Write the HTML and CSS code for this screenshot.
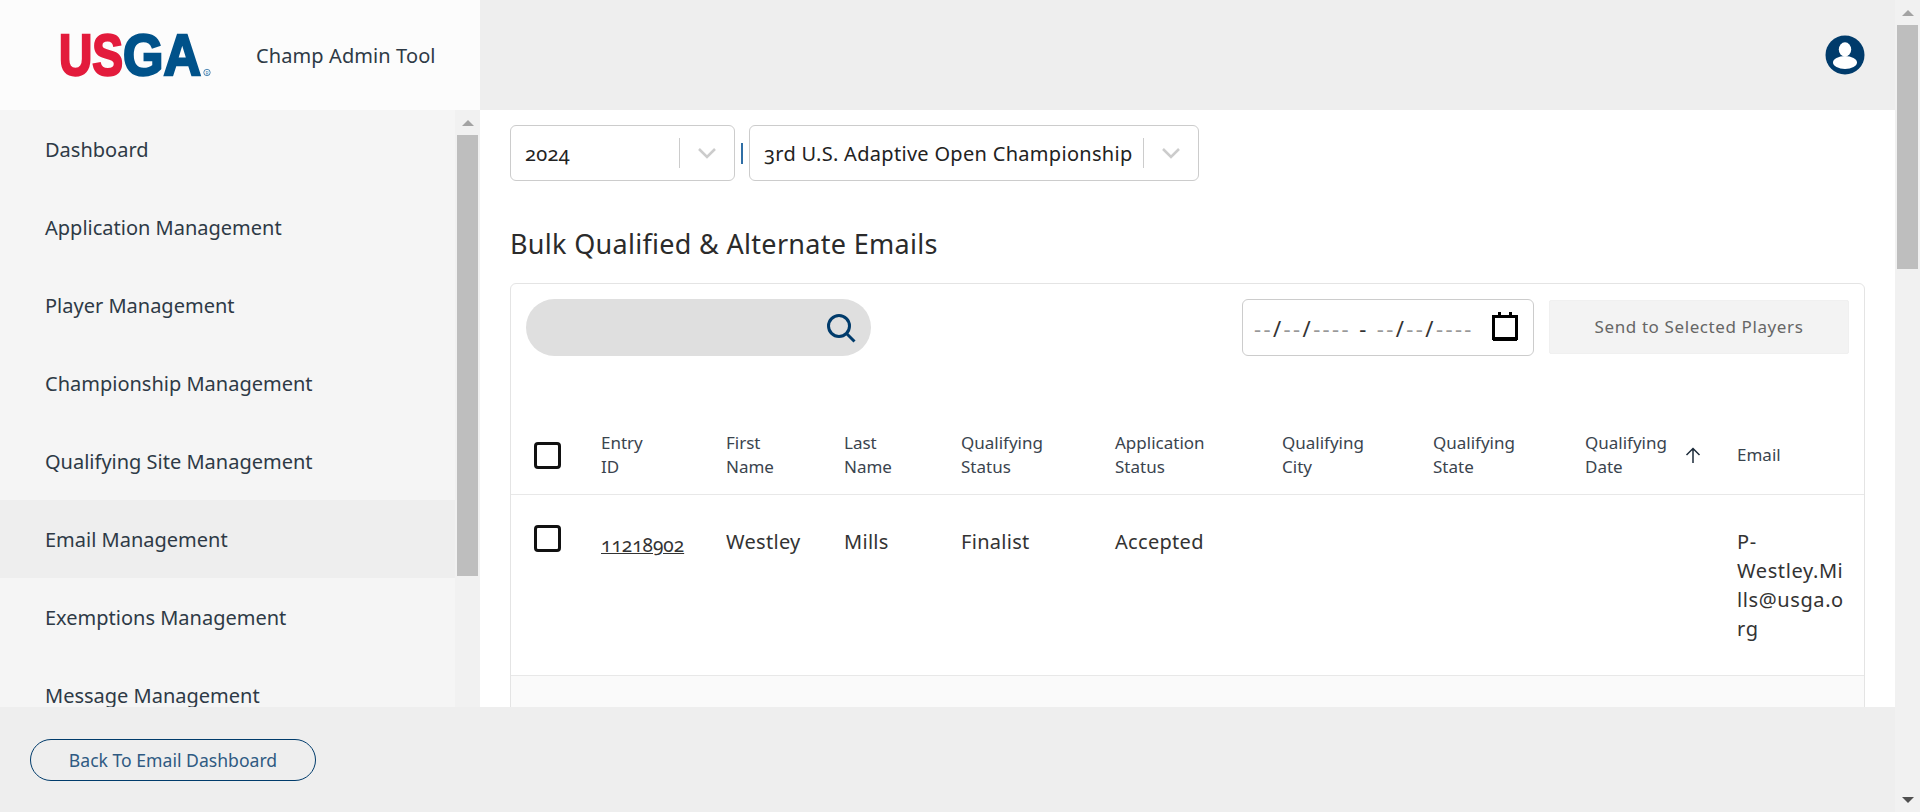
FILE: index.html
```html
<!DOCTYPE html>
<html lang="en">
<head>
    <meta charset="UTF-8">
    <meta name="viewport" content="width=device-width, initial-scale=1.0">
    <title>Champ Admin Tool</title>
    <link rel="stylesheet" href="styles.css">
</head>
<body>
    <div class="app">
        <div class="page">
            <header class="top">
                <div class="brand">
                    <svg class="logo" width="156" height="64" viewBox="0 0 156 64">
                        <text class="logo-us" x="-1" y="52" textLength="64" lengthAdjust="spacingAndGlyphs">US</text>
                        <text class="logo-ga" x="63" y="52" textLength="78" lengthAdjust="spacingAndGlyphs">GA</text>
                        <circle class="logo-reg" cx="147" cy="49.5" r="3.2"/>
                        <text class="logo-r" x="147" y="51.5">R</text>
                    </svg>
                    <span class="brand-name">Champ Admin Tool</span>
                </div>
                <div class="topbar">
                    <svg class="user-icon" width="40" height="40" viewBox="0 0 40 40">
                        <circle cx="20" cy="20" r="19.5" fill="#003b6b"/>
                        <ellipse cx="20" cy="14.5" rx="6.2" ry="7.2" fill="#fff"/>
                        <ellipse cx="20" cy="27.5" rx="12" ry="6.5" fill="#fff"/>
                    </svg>
                </div>
            </header>

            <div class="middle">
                <aside class="sidebar">
                    <nav class="menu">
                        <a class="menu-item">Dashboard</a>
                        <a class="menu-item">Application Management</a>
                        <a class="menu-item">Player Management</a>
                        <a class="menu-item">Championship Management</a>
                        <a class="menu-item">Qualifying Site Management</a>
                        <a class="menu-item menu-active">Email Management</a>
                        <a class="menu-item">Exemptions Management</a>
                        <a class="menu-item">Message Management</a>
                    </nav>
                    <div class="scrollbar">
                        <div class="arrow-box"><span class="arrow-up"></span></div>
                        <div class="thumb thumb-side"></div>
                    </div>
                </aside>

                <main class="main">
                    <div class="selects">
                        <div class="select select-year">
                            <span class="select-value">2024</span>
                            <span class="select-sep"></span>
                            <svg class="chevron" width="20" height="12" viewBox="0 0 20 12"><path d="M2 2l8 8 8-8" fill="none" stroke="#ccc" stroke-width="2.5"/></svg>
                        </div>
                        <span class="select-bar"></span>
                        <div class="select select-champ">
                            <span class="select-value">3rd U.S. Adaptive Open Championship</span>
                            <span class="select-sep"></span>
                            <svg class="chevron" width="20" height="12" viewBox="0 0 20 12"><path d="M2 2l8 8 8-8" fill="none" stroke="#ccc" stroke-width="2.5"/></svg>
                        </div>
                    </div>

                    <h1 class="title">Bulk Qualified &amp; Alternate Emails</h1>

                    <section class="card">
                        <div class="toolbar">
                            <div class="search">
                                <svg width="32" height="32" viewBox="0 0 32 32"><circle cx="14" cy="14" r="10.5" fill="none" stroke="#003b6b" stroke-width="3"/><path d="M21.5 21.5l8 8" stroke="#003b6b" stroke-width="3"/></svg>
                            </div>
                            <div class="toolbar-right">
                                <div class="date-box">
                                    <span class="date-text"><i>--</i>/<i>--</i>/<i>----</i> <b>-</b> <i>--</i>/<i>--</i>/<i>----</i></span>
                                    <svg class="cal-icon" width="28" height="30" viewBox="0 0 28 30"><path d="M2.5 5.500h23v22h-23z" fill="none" stroke="#000" stroke-width="3"/><path d="M2 26h24v4H2zM7 1h3v6H7zM18 1h3v6h-3z"/></svg>
                                </div>
                                <button class="send-btn">Send to Selected Players</button>
                            </div>
                        </div>

                        <table class="players">
                            <colgroup>
                                <col class="col-check"><col class="col-id"><col class="col-first"><col class="col-last"><col class="col-qstatus">
                                <col class="col-astatus"><col class="col-city"><col class="col-state"><col class="col-date"><col class="col-email">
                            </colgroup>
                            <thead>
                                <tr>
                                    <th class="check-cell"><span class="check"></span></th>
                                    <th>Entry<br>ID</th>
                                    <th>First<br>Name</th>
                                    <th>Last<br>Name</th>
                                    <th>Qualifying<br>Status</th>
                                    <th>Application<br>Status</th>
                                    <th>Qualifying<br>City</th>
                                    <th>Qualifying<br>State</th>
                                    <th>
                                        <div class="sort-head">
                                            <span>Qualifying<br>Date</span>
                                            <svg width="16" height="16" viewBox="0 0 16 16"><path d="M8 16V1.500M1.500 8L8 1.500 14.500 8" fill="none" stroke="#1c2b3a" stroke-width="1.500"/></svg>
                                        </div>
                                    </th>
                                    <th>Email</th>
                                </tr>
                            </thead>
                            <tbody>
                                <tr>
                                    <td class="check-cell"><span class="check"></span></td>
                                    <td class="id-cell"><a class="entry-link">11218902</a></td>
                                    <td>Westley</td>
                                    <td>Mills</td>
                                    <td>Finalist</td>
                                    <td>Accepted</td>
                                    <td></td>
                                    <td></td>
                                    <td></td>
                                    <td class="email-cell">P-<br>Westley.Mills@usga.org</td>
                                </tr>
                                <tr class="row-alt">
                                    <td colspan="10"></td>
                                </tr>
                            </tbody>
                        </table>
                    </section>
                </main>
            </div>

            <footer class="bottom">
                <button class="back-btn">Back To Email Dashboard</button>
            </footer>
        </div>

        <div class="scrollbar scrollbar-page">
            <div class="arrow-box"><span class="arrow-up"></span></div>
            <div class="thumb thumb-page"></div>
            <div class="arrow-box"><span class="arrow-down"></span></div>
        </div>
    </div>
</body>
</html>
```

FILE: styles.css
```css
* {
    margin: 0;
    padding: 0;
    box-sizing: border-box;
    font-family: "Noto Sans", Arial, sans-serif;
}
body {
    height: 812px;
    overflow: hidden;
    background: #fff;
    color: #2e3a46;
}
.app {
    display: flex;
    height: 812px;
}
.page {
    width: 1895px;
    display: flex;
    flex-direction: column;
}

/* scrollbars */
.scrollbar {
    width: 25px;
    flex-shrink: 0;
    display: flex;
    flex-direction: column;
    background: #f1f1f1;
}
.arrow-box {
    height: 25px;
    flex-shrink: 0;
    display: flex;
    align-items: center;
    justify-content: center;
}
.arrow-up {
    border-left: 6px solid transparent;
    border-right: 6px solid transparent;
    border-bottom: 6px solid #a3a3a3;
}
.arrow-down {
    border-left: 6px solid transparent;
    border-right: 6px solid transparent;
    border-top: 6px solid #505050;
}
.thumb {
    margin: 0 2px;
    background: #bebebe;
    flex-shrink: 0;
}
.thumb-side { height: 441px; }
.thumb-page { height: 244px; margin-bottom: auto; }

/* top */
.top {
    height: 110px;
    display: flex;
    flex-shrink: 0;
}
.brand {
    width: 480px;
    background: #fcfcfc;
    display: flex;
    align-items: center;
    padding-left: 60px;
}
.logo-us, .logo-ga {
    font-family: "Liberation Sans", Arial, sans-serif;
    font-weight: 700;
    font-size: 57px;
    stroke-width: 2.4px;
}
.logo-us { fill: #e31b3c; stroke: #e31b3c; }
.logo-ga { fill: #00528a; stroke: #00528a; }
.logo-reg { fill: none; stroke: #3d7cad; stroke-width: 0.9; }
.logo-r {
    font-size: 5px;
    fill: #3d7cad;
    text-anchor: middle;
}
.brand-name {
    margin-left: 40px;
    font-size: 20px;
    letter-spacing: 0.1px;
    color: #2e3a46;
}
.topbar {
    flex: 1;
    background: #eee;
    display: flex;
    align-items: center;
    justify-content: flex-end;
    padding-right: 30px;
}

/* sidebar */
.middle {
    flex: 1;
    display: flex;
    min-height: 0;
}
.sidebar {
    width: 480px;
    display: flex;
    flex-shrink: 0;
}
.menu {
    flex: 1;
    background: #f5f5f5;
    overflow: hidden;
}
.menu-item {
    display: flex;
    align-items: center;
    height: 78px;
    padding-left: 45px;
    font-size: 20px;
    color: #2e3a46;
}
.menu-active { background: #eee; }

/* main */
.main {
    flex: 1;
    overflow: hidden;
    background: #fff;
    padding: 15px 30px 0;
}
.selects {
    display: flex;
    align-items: center;
}
.select {
    height: 56px;
    display: flex;
    align-items: center;
    border: 1px solid #ccc;
    border-radius: 6px;
    padding-left: 14px;
    font-size: 20px;
    letter-spacing: 0.3px;
    font-variant-numeric: oldstyle-nums;
    color: #222;
}
.select-year { width: 225px; }
.select-champ { width: 450px; }
.select-value { flex: 1; white-space: nowrap; }
.select-sep {
    width: 1px;
    height: 30px;
    background: #ccc;
}
.chevron { margin: 0 17px; }
.select-bar {
    width: 2px;
    height: 21px;
    margin: 0 6px;
    background: #2f6ea5;
}
.title {
    margin: 46px 0 22px;
    font-size: 27px;
    line-height: 34px;
    letter-spacing: 0.3px;
    font-weight: 400;
    color: #2b2b2b;
}

/* card */
.card {
    border: 1px solid #e4e4e4;
    border-radius: 6px;
    height: 460px;
}
.toolbar {
    display: flex;
    justify-content: space-between;
    align-items: center;
    padding: 15px 15px 0;
}
.search {
    width: 345px;
    height: 57px;
    border-radius: 29px;
    background: #dfdfdf;
    display: flex;
    align-items: center;
    justify-content: flex-end;
    padding-right: 14px;
}
.toolbar-right {
    display: flex;
    align-items: center;
    gap: 15px;
}
.date-box {
    width: 292px;
    height: 57px;
    border: 1px solid #ccc;
    border-radius: 6px;
    display: flex;
    align-items: center;
    justify-content: space-between;
    padding: 0 14px 0 11px;
}
.date-text {
    font-size: 22px;
    letter-spacing: 2.4px;
    color: #333;
    white-space: nowrap;
}
.date-text i {
    font-style: normal;
    color: #999;
}
.date-text b { font-weight: 400; }
.cal-icon { margin-bottom: 3px; }
.send-btn {
    width: 300px;
    height: 54px;
    margin-bottom: 2px;
    border: 1px solid #f0f0f0;
    border-radius: 2px;
    background: #f3f3f3;
    color: #666;
    font-size: 17px;
    letter-spacing: 0.6px;
}

/* table */
.players {
    width: 100%;
    table-layout: fixed;
    border-collapse: collapse;
    margin-top: 61px;
}
.col-check { width: 74px; }
.col-id { width: 125px; }
.col-first { width: 118px; }
.col-last { width: 117px; }
.col-qstatus { width: 154px; }
.col-astatus { width: 167px; }
.col-city { width: 151px; }
.col-state { width: 152px; }
.col-date { width: 152px; }
.players th {
    height: 77px;
    padding: 0 16px;
    font-size: 17px;
    line-height: 24px;
    font-weight: 400;
    text-align: left;
    color: #3a444e;
    border-bottom: 1px solid #e8e8e8;
}
.players td {
    height: 180px;
    padding: 32px 16px 32px;
    vertical-align: top;
    font-size: 20px;
    line-height: 29px;
    letter-spacing: 0.3px;
    color: #333;
    border-bottom: 1px solid #e8e8e8;
}
.players .check-cell {
    padding-left: 23px;
    padding-right: 0;
}
.players td.check-cell { padding-top: 30px; }
.check {
    display: block;
    width: 27px;
    height: 27px;
    border: 3px solid #111;
    border-radius: 4px;
    background: #fff;
}
.sort-head {
    display: flex;
    align-items: center;
    gap: 18px;
    white-space: nowrap;
}
.players .id-cell {
    padding-top: 36px;
    font-size: 19px;
    letter-spacing: 0;
    font-variant-numeric: oldstyle-nums;
}
.entry-link { text-decoration: underline; }
.players .email-cell {
    padding-right: 20px;
    letter-spacing: 0.6px;
    word-break: break-all;
}
.players .row-alt td {
    height: 60px;
    padding: 0;
    background: #fafafa;
}

/* bottom */
.bottom {
    height: 105px;
    flex-shrink: 0;
    background: #eee;
    display: flex;
    align-items: center;
    padding-left: 30px;
}
.back-btn {
    width: 286px;
    height: 42px;
    border: 1.500px solid #003b6b;
    border-radius: 21px;
    background: transparent;
    color: #2f5a82;
    font-size: 17.600px;
}
```
